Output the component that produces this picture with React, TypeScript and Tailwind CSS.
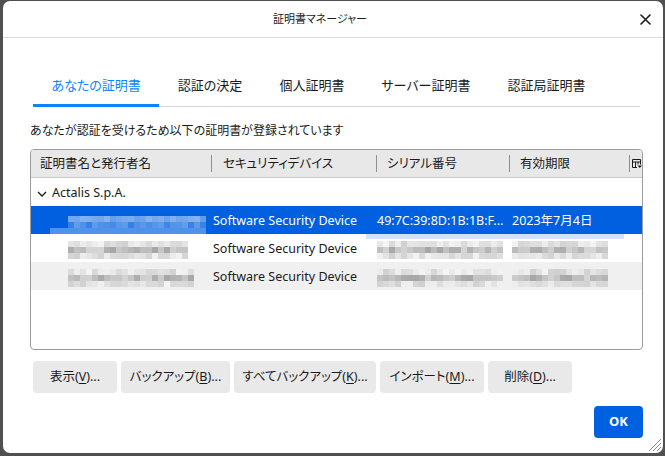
import { ReactNode } from "react";

const FONT = "[font-family:'Noto_Sans','Noto_Sans_CJK_JP',sans-serif] [font-feature-settings:'palt']";

function Mosaic({ w, h, seed, tone }: { w: number; h: number; seed: number; tone: "gray" | "blue" }) {
  const size = 6;
  const cols = Math.floor(w / size);
  const rows = Math.floor(h / size);
  let s = seed;
  const rand = () => {
    s = (s * 9301 + 49297) % 233280;
    return s / 233280;
  };
  const cells: string[] = [];
  for (let r = 0; r < rows; r++) {
    for (let c = 0; c < cols; c++) {
      const dark = r === 1 ? 0.3 + rand() * 0.4 : 0.05 + rand() * 0.3;
      if (tone === "gray") {
        const v = Math.round(250 - dark * 120);
        cells.push(`rgb(${v},${v},${v})`);
      } else {
        const f = 0.55 - dark * 0.5;
        const mix = (a: number) => Math.round(a + (255 - a) * f);
        cells.push(`rgb(${mix(0)},${mix(96)},${mix(223)})`);
      }
    }
  }
  return (
    <div className="flex flex-wrap" style={{ width: cols * size, height: rows * size }}>
      {cells.map((c, i) => (
        <div key={i} className="h-[6px] w-[6px]" style={{ background: c }} />
      ))}
    </div>
  );
}

function Key({ k }: { k: string }) {
  return <span className="underline underline-offset-2">{k}</span>;
}

function Btn({ w, children }: { w: string; children: ReactNode }) {
  return (
    <button className={`flex h-[32px] items-center justify-center rounded-[4px] bg-[#e9e9e9] pt-[1px] text-[12.5px] text-[#1a1a1a] ${w}`}>
      {children}
    </button>
  );
}

const tabs = ["あなたの証明書", "認証の決定", "個人証明書", "サーバー証明書", "認証局証明書"];

export default function App() {
  return (
    <div className={`h-[456px] w-[665px] bg-[#505050] pb-[3px] pl-[3px] pr-[2px] pt-[1px] ${FONT}`}>
      <div className="relative flex h-full flex-col rounded-[7px] bg-white">
        {/* title bar */}
        <div className="flex h-[37px] shrink-0 items-center border-b border-[#dadada]">
          <div className="flex-1 pt-[1px] text-center text-[11px] text-[#1a1a1a]">証明書マネージャー</div>
          <button className="mr-[10px] flex h-[16px] w-[16px] items-center justify-center">
            <svg width="11" height="11" viewBox="0 0 11 11" fill="none" stroke="#1a1a1a" strokeWidth="1.6" strokeLinecap="round">
              <path d="M1 1l9 9M10 1L1 10" />
            </svg>
          </button>
        </div>

        {/* tabs */}
        <div className="ml-[30px] mr-[23px] mt-[29px] flex border-b border-[#d4d4d4]">
          {tabs.map((t, i) => (
            <div
              key={t}
              className={`-mb-px flex h-[40px] items-center border-b-[3px] px-[18.5px] pt-[1px] text-[13px] ${
                i === 0 ? "border-[#0a84ff] text-[#0a84ff]" : "border-transparent text-[#1a1a1a]"
              }`}
            >
              {t}
            </div>
          ))}
        </div>

        <p className="ml-[27px] mt-[16px] text-[12px] leading-[16px] text-[#1a1a1a]">
          あなたが認証を受けるため以下の証明書が登録されています
        </p>

        {/* table */}
        <div className="ml-[27px] mr-[20px] mt-[10px] flex h-[201px] flex-col overflow-hidden rounded-[4px] border border-[#9c9c9c] text-[12.5px] text-[#1a1a1a]">
          <div className="flex h-[28px] shrink-0 items-center border-b border-[#c8c8c8] bg-[#e8e8e8]">
            <div className="w-[180px] pl-[9px] pt-[2px]">証明書名と発行者名</div>
            <div className="h-[17px] w-px bg-[#8f8f8f]" />
            <div className="w-[164px] pl-[11px] pt-[2px]">セキュリティデバイス</div>
            <div className="h-[17px] w-px bg-[#8f8f8f]" />
            <div className="w-[132px] pl-[10px] pt-[2px]">シリアル番号</div>
            <div className="h-[17px] w-px bg-[#8f8f8f]" />
            <div className="w-[119px] pl-[10px] pt-[2px]">有効期限</div>
            <div className="h-[17px] w-px bg-[#8f8f8f]" />
            <div className="flex flex-1 justify-center pl-[2px]">
              <svg width="10" height="10" viewBox="0 0 10 10" fill="none" stroke="#1a1a1a" strokeWidth="1">
                <path d="M0.5 0.5h8v5M0.5 0.5v8h4.5M0.5 3h8M3.5 3v5.5M6 3v2.5" />
                <path d="M5.5 6.5h4.5l-2.25 2.5z" fill="#1a1a1a" stroke="none" />
              </svg>
            </div>
          </div>

          <div className="flex h-[28px] items-center pl-[6px] pt-[3px]">
            <svg width="10" height="6" viewBox="0 0 10 6" fill="none" stroke="#1a1a1a" strokeWidth="1.3">
              <path d="M1 1l4 4 4-4" />
            </svg>
            <span className="ml-[5px]">Actalis S.p.A.</span>
          </div>

          <div className="relative flex h-[28px] items-center bg-[#0060df] pt-[3px] text-white">
            <div className="relative w-[181px] self-stretch">
              <div className="absolute left-[37px] top-[7px]">
                <Mosaic w={138} h={18} seed={7} tone="blue" />
              </div>
              <div className="absolute bottom-0 left-[19px] h-[6px] w-[156px] bg-[#4e92ea]" />
            </div>
            <div className="w-[165px] pl-[1px]">Software Security Device</div>
            <div className="w-[133px]">49:7C:39:8D:1B:1B:F...</div>
            <div className="pl-[2px]">2023年7月4日</div>
            <div className="absolute left-[335px] top-[28px] h-[5px] w-[258px] bg-[#d2e2f8]" />
          </div>

          <div className="flex h-[28px] items-center pt-[3px]">
            <div className="w-[181px] pl-[37px]">
              <Mosaic w={122} h={18} seed={31} tone="gray" />
            </div>
            <div className="w-[165px] pl-[1px]">Software Security Device</div>
            <div className="w-[133px]">
              <Mosaic w={128} h={18} seed={53} tone="gray" />
            </div>
            <div className="pl-[2px]">
              <Mosaic w={96} h={18} seed={97} tone="gray" />
            </div>
          </div>

          <div className="flex h-[28px] items-center bg-[#f0f0f0] pt-[3px]">
            <div className="w-[181px] pl-[37px]">
              <Mosaic w={126} h={18} seed={113} tone="gray" />
            </div>
            <div className="w-[165px] pl-[1px]">Software Security Device</div>
            <div className="w-[133px]">
              <Mosaic w={128} h={18} seed={151} tone="gray" />
            </div>
            <div className="pl-[2px]">
              <Mosaic w={96} h={18} seed={173} tone="gray" />
            </div>
          </div>
        </div>

        {/* action buttons */}
        <div className="ml-[30px] mt-[11px] flex gap-[4px]">
          <Btn w="w-[84px]">表示(<Key k="V" />)...</Btn>
          <Btn w="w-[109px]">バックアップ(<Key k="B" />)...</Btn>
          <Btn w="w-[142px]">すべてバックアップ(<Key k="K" />)...</Btn>
          <Btn w="w-[104px]">インポート(<Key k="M" />)...</Btn>
          <Btn w="w-[84px]">削除(<Key k="D" />)...</Btn>
        </div>

        <div className="mr-[20px] mt-[13px] flex justify-end">
          <button className="h-[32px] w-[49px] rounded-[4px] bg-[#0061e0] text-[13px] font-bold text-white">OK</button>
        </div>

        {/* resize grip */}
        <svg className="absolute bottom-[1px] right-[1px]" width="14" height="14" viewBox="0 0 14 14" stroke="#8a8a8a" strokeWidth="1">
          <path d="M13 1L1 13M13 5L5 13M13 9L9 13" />
        </svg>
      </div>
    </div>
  );
}
